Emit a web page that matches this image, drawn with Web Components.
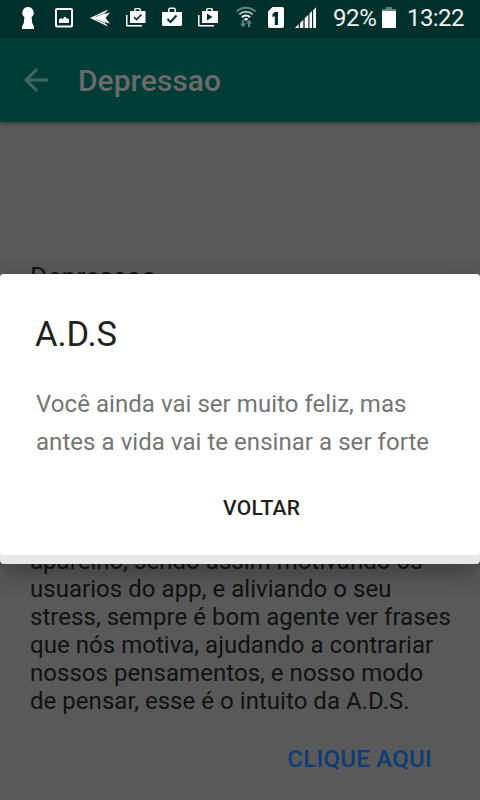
<!DOCTYPE html>
<html lang="pt-BR">
<head>
<meta charset="utf-8">
<meta name="viewport" content="width=device-width, initial-scale=1">
<title>Depressao</title>
<style>
    html, body {
        margin: 0;
        height: 100%;
        overflow: hidden;
        background: #595959;
        font-family: Roboto, "Liberation Sans", sans-serif;
    }
</style>
</head>
<body>
<app-screen>
    <status-bar slot="status" battery="92%" time="13:22"></status-bar>
    <tool-bar slot="toolbar">Depressao</tool-bar>
    <info-card>
        <span slot="title">Depressao</span>
        <span>aparelho, sendo assim motivando os<br>usuarios do app, e aliviando o seu<br>stress, sempre é bom agente ver frases<br>que nós motiva, ajudando a contrariar<br>nossos pensamentos, e nosso modo<br>de pensar, esse é o intuito da A.D.S.</span>
        <span slot="action">CLIQUE AQUI</span>
    </info-card>
    <alert-dialog slot="dialog">
        <span slot="title">A.D.S</span>
        <span>Você ainda vai ser muito feliz, mas<br>antes a vida vai te ensinar a ser forte</span>
        <span slot="action">VOLTAR</span>
    </alert-dialog>
</app-screen>

<script>
// every icon lives in a 24x38 cell, the full height of the status bar
const ICONS = {
    keyhole: '<path d="M12 7a5.700 5.700 0 0 0-3.600 10.100L7.800 23 6 26.500V29h12v-2.500L16.200 23l-.6-5.900A5.700 5.700 0 0 0 12 7z"/>',
    image: '<path fill-rule="evenodd" d="M5 8h14a2 2 0 0 1 2 2v15.500a2 2 0 0 1-2 2H5a2 2 0 0 1-2-2V10a2 2 0 0 1 2-2zm0 2v15.500h14V10z"/><path d="M7 23v-3.500l2-1.500 1.500 1 2.500-2.500 1.500 2 1-.5 1.500 1.500V23z"/>',
    plane: '<path d="M2 18 20 9.500l-3.500 4.500 5.500-1.500-4.500 5.500 4.500 5.500-5.500-1.500 3.500 4.500z"/><path d="m8 16.500 10-4M8 19.500l10 4" stroke="#00302b" stroke-width=".5"/>',
    bagCheck: '<path fill-rule="evenodd" d="M6 11h4V9l1.500-1h4L17 9v2h4.500v12H6zM11.500 11h4V9.300h-4z"/><path d="M2 15h1.500v10H18v1.500H3.500A1.500 1.500 0 0 1 2 25z"/><path d="m10 17 2.500 2.500 5-5" fill="none" stroke="#00302b" stroke-width="1.700"/>',
    bag: '<path fill-rule="evenodd" d="M2 12h6V9l1.500-1.500h5L16 9v3h6v12.500a1.500 1.500 0 0 1-1.500 1.500h-17A1.500 1.500 0 0 1 2 24.500zM9.500 12h5V9h-5z"/><path d="m7.500 19 3 3 6-6.500" fill="none" stroke="#00302b" stroke-width="2"/>',
    bagPlay: '<path fill-rule="evenodd" d="M6 11h4V9l1.500-1h4L17 9v2h5v12H6zM11.500 11h4V9.300h-4z"/><path d="M2 15h1.500v10H18v1.500H3.500A1.500 1.500 0 0 1 2 25z"/><path d="M11 13.500v7l5.500-3.500z" fill="#00302b"/>',
    wifi: '<g fill="none" stroke-width="2"><path d="M2.700 11.500a13.200 13.200 0 0 1 18.600 0" stroke="#5c8580"/><path d="M5.300 14.400a9.500 9.500 0 0 1 13.400 0" stroke="#a9bfbc"/><path d="M8 17.300a5.600 5.600 0 0 1 8 0" stroke="#fff"/></g><path d="m9.700 19 2.300 2.300 2.300-2.300a3.300 3.300 0 0 0-4.600 0z"/><path d="M9 20v5M15 27v-5" stroke="#5c8580" stroke-width="2"/><path d="M6 23.500h6l-3 3.800zM12 23.500h6l-3-3.800z" fill="#5c8580"/>',
    sim: '<path d="M8.500 7H18a2 2 0 0 1 2 2v17a2 2 0 0 1-2 2H6a2 2 0 0 1-2-2V11.500z"/><path d="M10.800 12H14v13h-3.200v-8.800L8.500 17v-3z" fill="#00302b"/>',
    signal: '<path d="M1 28l3.700-3.700V28zM6 28v-5l3.300-3.300V28zM10.700 28v-9.700l3.600-3.600V28zM15.500 28V13.500l2.500-2.500v17zM19.200 28V10.300L22 7.300V28z"/>',
    battery: '<path d="M5 9h4V7h6v2h4v2.200H5z" fill="#5c8580"/><path d="M5 11h14v17H5z"/>'
};

const icon = name => `<svg viewBox="0 0 24 38" width="24" height="38" fill="#fff">${ICONS[name]}</svg>`;

class AppScreen extends HTMLElement {
    constructor() {
        super();
        this.attachShadow({ mode: 'open' }).innerHTML = `
            <style>
                :host {
                    display: flex;
                    flex-direction: column;
                    position: relative;
                    width: 480px;
                    height: 800px;
                    overflow: hidden;
                    background: #595959;
                }
                .overlay {
                    position: absolute;
                    top: 274px;
                    left: 0;
                    right: 0;
                    z-index: 2;
                }
            </style>
            <slot name="status"></slot>
            <slot name="toolbar"></slot>
            <slot></slot>
            <div class="overlay"><slot name="dialog"></slot></div>
        `;
    }
}

class StatusBar extends HTMLElement {
    constructor() {
        super();
        this.attachShadow({ mode: 'open' });
    }

    connectedCallback() {
        this.shadowRoot.innerHTML = `
            <style>
                :host {
                    display: flex;
                    height: 38px;
                    flex: none;
                    background: #00302b;
                    color: #f0f3f3;
                    font-size: 24px;
                    line-height: 37px;
                    padding-left: 16px;
                    white-space: nowrap;
                }
                svg { display: block; flex: none; }
                .notifications { display: flex; gap: 12px; }
                .system { display: flex; gap: 6px; margin-left: 14px; }
                .battery { width: 44px; margin-left: 15px; letter-spacing: -.4px; }
                .time { margin-left: 6px; letter-spacing: -.6px; }
            </style>
            <div class="notifications">
                ${['keyhole', 'image', 'plane', 'bagCheck', 'bag', 'bagPlay'].map(icon).join('')}
            </div>
            <div class="system">${['wifi', 'sim', 'signal'].map(icon).join('')}</div>
            <div class="battery">${this.getAttribute('battery')}</div>
            ${icon('battery')}
            <div class="time">${this.getAttribute('time')}</div>
        `;
    }
}

class ToolBar extends HTMLElement {
    constructor() {
        super();
        this.attachShadow({ mode: 'open' }).innerHTML = `
            <style>
                :host {
                    display: flex;
                    align-items: center;
                    flex: none;
                    height: 84px;
                    padding-left: 18px;
                    background: #003d36;
                    color: #6a6a6a;
                    box-shadow: 0 1px 5px rgba(0, 0, 0, .45);
                    font-size: 30px;
                    font-weight: 500;
                }
                svg { display: block; margin-right: 24px; }
            </style>
            <svg width="36" height="36" viewBox="0 0 24 24" fill="#42655f"><path d="M20 11H7.830l5.590-5.590L12 4l-8 8 8 8 1.410-1.410L7.830 13H20v-2z"/></svg>
            <slot></slot>
        `;
    }
}

class InfoCard extends HTMLElement {
    constructor() {
        super();
        this.attachShadow({ mode: 'open' }).innerHTML = `
            <style>
                :host {
                    display: flex;
                    flex-direction: column;
                    padding: 139px 30px 0;
                    color: #111;
                    white-space: nowrap;
                }
                .title { font-size: 26.6px; line-height: 32px; height: 254px; }
                .text { font-size: 24px; line-height: 28px; margin-top: 32px; letter-spacing: .04px; }
                .action {
                    align-self: flex-end;
                    margin: 30px 18px 0 0;
                    color: #0e3c75;
                    font-size: 24px;
                    font-weight: 500;
                    line-height: 28px;
                    letter-spacing: .25px;
                }
            </style>
            <div class="title"><slot name="title"></slot></div>
            <div class="text"><slot></slot></div>
            <div class="action"><slot name="action"></slot></div>
        `;
    }
}

class AlertDialog extends HTMLElement {
    constructor() {
        super();
        this.attachShadow({ mode: 'open' }).innerHTML = `
            <style>
                :host {
                    display: block;
                    height: 290px;
                    border-radius: 4px;
                    background: #e8e8e8;
                    box-shadow: 0 9px 24px rgba(0, 0, 0, .32);
                    white-space: nowrap;
                }
                .panel {
                    display: flex;
                    flex-direction: column;
                    box-sizing: border-box;
                    height: 281px;
                    padding: 39px 36px 0;
                    border-radius: 4px;
                    background: #fff;
                }
                .title { color: #212121; font-size: 34.5px; line-height: 42px; margin-left: -1px; }
                .text { color: #757575; font-size: 24px; line-height: 38px; margin-top: 30px; letter-spacing: .05px; }
                .action {
                    margin: 23px 0 0 187px;
                    color: #212121;
                    font-size: 21px;
                    font-weight: 500;
                    line-height: 48px;
                    height: 48px;
                    letter-spacing: .25px;
                }
            </style>
            <div class="panel">
                <div class="title"><slot name="title"></slot></div>
                <div class="text"><slot></slot></div>
                <div class="action"><slot name="action"></slot></div>
            </div>
        `;
    }
}

customElements.define('app-screen', AppScreen);
customElements.define('status-bar', StatusBar);
customElements.define('tool-bar', ToolBar);
customElements.define('info-card', InfoCard);
customElements.define('alert-dialog', AlertDialog);
</script>
</body>
</html>
